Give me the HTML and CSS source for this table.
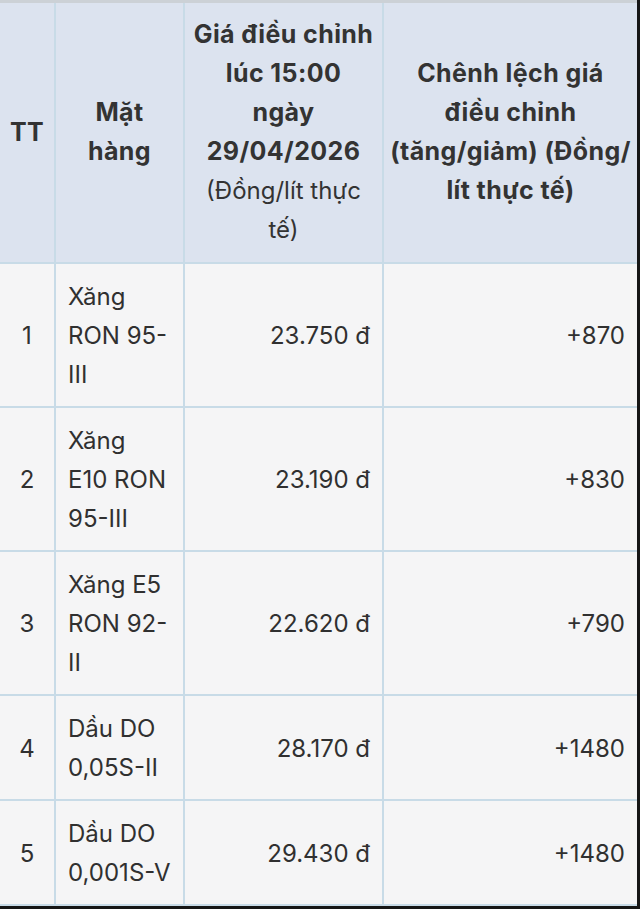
FILE: index.html
```html
<!DOCTYPE html>
<html lang="vi">
<head>
<meta charset="utf-8">
<title>Giá xăng dầu</title>
<link rel="stylesheet" href="styles.css">
</head>
<body>
<div class="frame">
  <table class="price-table">
    <colgroup>
      <col class="c-tt">
      <col class="c-name">
      <col class="c-price">
      <col class="c-diff">
    </colgroup>
    <thead>
      <tr>
        <th>TT</th>
        <th>Mặt<br>hàng</th>
        <th>Giá điều chỉnh<br>lúc 15:00<br>ngày<br>29/04/2026<br><span class="unit">(Đồng/lít thực<br>tế)</span></th>
        <th>Chênh lệch giá<br>điều chỉnh<br>(tăng/giảm) (Đồng/<br>lít thực tế)</th>
      </tr>
    </thead>
    <tbody>
      <tr>
        <td class="num">1</td>
        <td>Xăng RON 95-III</td>
        <td class="right">23.750 đ</td>
        <td class="right">+870</td>
      </tr>
      <tr>
        <td class="num">2</td>
        <td>Xăng E10 RON 95-III</td>
        <td class="right">23.190 đ</td>
        <td class="right">+830</td>
      </tr>
      <tr>
        <td class="num">3</td>
        <td>Xăng E5 RON 92-II</td>
        <td class="right">22.620 đ</td>
        <td class="right">+790</td>
      </tr>
      <tr>
        <td class="num">4</td>
        <td>Dầu DO 0,05S-II</td>
        <td class="right">28.170 đ</td>
        <td class="right">+1480</td>
      </tr>
      <tr>
        <td class="num">5</td>
        <td>Dầu DO 0,001S-V</td>
        <td class="right">29.430 đ</td>
        <td class="right">+1480</td>
      </tr>
    </tbody>
  </table>
</div>
</body>
</html>
```

FILE: styles.css
```css
html, body {
  margin: 0;
  padding: 0;
  background: #161616;
}

.frame {
  width: 637px;
  height: 906px;
  overflow: hidden;
  background: #f5f5f6;
  border-top: 3px solid #ccd1d6;
  box-sizing: border-box;
}

.price-table {
  width: 637px;
  border-collapse: collapse;
  table-layout: fixed;
  font-family: Inter, "Noto Sans", sans-serif;
  font-size: 24px;
  line-height: 39px;
  color: #303030;
}

.c-tt { width: 55px; }
.c-name { width: 129px; }
.c-price { width: 199px; }
.c-diff { width: 254px; }

.price-table th,
.price-table td {
  border: 2px solid #c8dbe7;
  padding: 13px 12px 12px;
  vertical-align: middle;
}

.price-table tr > :first-child { border-left: none; }
.price-table tr > :last-child { border-right: none; }
.price-table thead th { border-top: none; }

.price-table thead th {
  background: #dce3ef;
  font-weight: 700;
  font-size: 25px;
  letter-spacing: 0.4px;
  text-align: center;
  white-space: nowrap;
  padding: 12px 4px 13px;
  color: #333333;
}

.price-table .unit {
  font-weight: 400;
  font-size: 24px;
  letter-spacing: 0;
}

.price-table tbody td {
  background: #f5f5f6;
  text-align: left;
}

.price-table td.num { text-align: center; }
.price-table td.right { text-align: right; }
```
